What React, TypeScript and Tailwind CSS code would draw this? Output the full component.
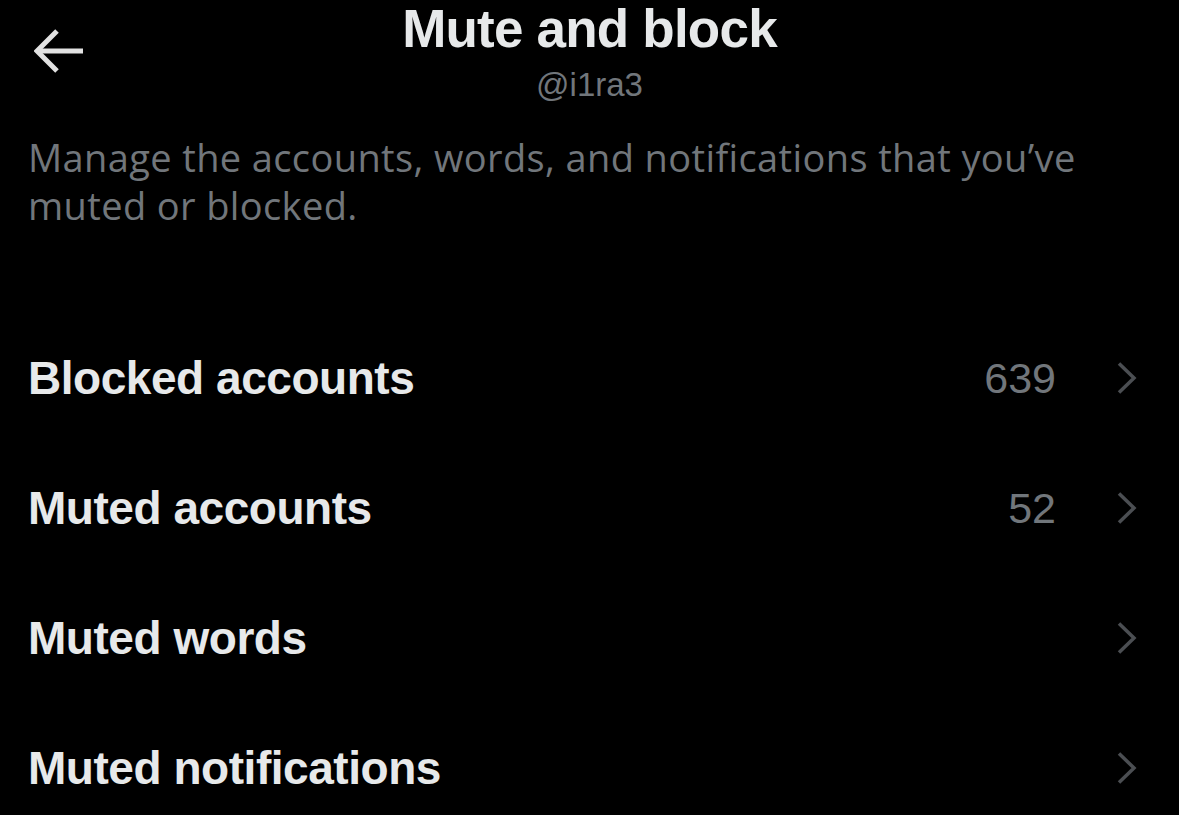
import React from 'react';

const rows = [
  { label: 'Blocked accounts', count: '639' },
  { label: 'Muted accounts', count: '52' },
  { label: 'Muted words', count: '' },
  { label: 'Muted notifications', count: '' },
];

const BackArrow = () => (
  <svg width="50" height="44" viewBox="0 0 50 44" fill="none">
    <path d="M3 22 H49" stroke="#e2e2e2" strokeWidth="5" />
    <path d="M23 2 L3 22 L23 42" stroke="#e2e2e2" strokeWidth="5" />
  </svg>
);

const Chevron = () => (
  <svg width="20" height="32" viewBox="0 0 20 32" fill="none">
    <path d="M2 1.5 L17 16 L2 30.5" stroke="#4b4e52" strokeWidth="3.5" />
  </svg>
);

export default function App() {
  return (
    <div className="w-full h-[815px] bg-black overflow-hidden font-['Liberation_Sans',Arial,sans-serif]">
      <div className="grid grid-cols-[1fr_auto_1fr] pt-[2px]">
        <div className="pl-[34px] pt-[27px]">
          <BackArrow />
        </div>
        <div className="flex flex-col items-center">
          <h1 className="text-[53px] leading-none font-bold text-[#e7e9ea] tracking-[-0.015em]">Mute and block</h1>
          <div className="mt-[13px] text-[33px] leading-none text-[#71767b]">@i1ra3</div>
        </div>
        <div />
      </div>

      <p className="mt-[32px] pl-[28px] pr-[40px] text-[38px] leading-[48px] text-[#71767b] tracking-[0.01em] font-['Open_Sans',sans-serif]">
        Manage the accounts, words, and notifications that you’ve muted or blocked.
      </p>

      <div className="mt-[84px] flex flex-col">
        {rows.map((r) => (
          <div key={r.label} className="h-[130px] flex items-center pl-[28px] pr-[42px]">
            <span className="flex-1 text-[46px] leading-none font-bold text-[#e7e9ea] tracking-[-0.01em]">
              {r.label}
            </span>
            {r.count && <span className="text-[43px] leading-none text-[#71767b]">{r.count}</span>}
            <span className="ml-[61px] flex">
              <Chevron />
            </span>
          </div>
        ))}
      </div>
    </div>
  );
}
